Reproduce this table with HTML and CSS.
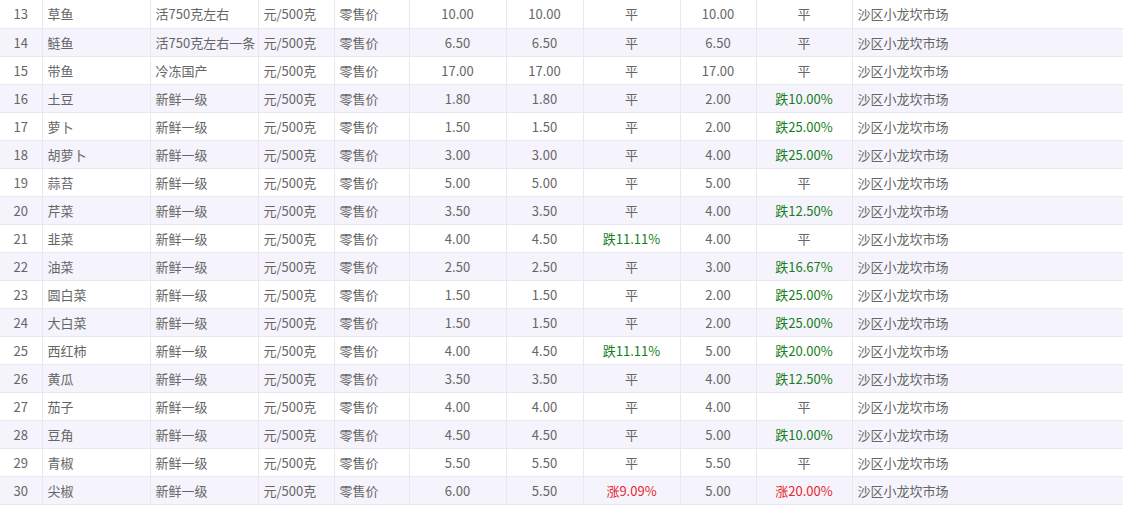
FILE: index.html
```html
<!DOCTYPE html>
<html lang="zh">
<head>
<meta charset="utf-8">
<title>价格表</title>
<link rel="stylesheet" href="styles.css">
</head>
<body>
<table class="price-table">
<colgroup>
<col class="c-no"><col class="c-name"><col class="c-spec"><col class="c-unit"><col class="c-type"><col class="c-p1"><col class="c-p2"><col class="c-ch1"><col class="c-p3"><col class="c-ch2"><col class="c-mkt">
</colgroup>
<tbody>
<tr><td class="ctr">13</td><td>草鱼</td><td>活750克左右</td><td>元/500克</td><td>零售价</td><td class="ctr">10.00</td><td class="ctr">10.00</td><td class="ctr">平</td><td class="ctr">10.00</td><td class="ctr">平</td><td>沙区小龙坎市场</td></tr>
<tr><td class="ctr">14</td><td>鲢鱼</td><td>活750克左右一条</td><td>元/500克</td><td>零售价</td><td class="ctr">6.50</td><td class="ctr">6.50</td><td class="ctr">平</td><td class="ctr">6.50</td><td class="ctr">平</td><td>沙区小龙坎市场</td></tr>
<tr><td class="ctr">15</td><td>带鱼</td><td>冷冻国产</td><td>元/500克</td><td>零售价</td><td class="ctr">17.00</td><td class="ctr">17.00</td><td class="ctr">平</td><td class="ctr">17.00</td><td class="ctr">平</td><td>沙区小龙坎市场</td></tr>
<tr><td class="ctr">16</td><td>土豆</td><td>新鲜一级</td><td>元/500克</td><td>零售价</td><td class="ctr">1.80</td><td class="ctr">1.80</td><td class="ctr">平</td><td class="ctr">2.00</td><td class="ctr down">跌10.00%</td><td>沙区小龙坎市场</td></tr>
<tr><td class="ctr">17</td><td>萝卜</td><td>新鲜一级</td><td>元/500克</td><td>零售价</td><td class="ctr">1.50</td><td class="ctr">1.50</td><td class="ctr">平</td><td class="ctr">2.00</td><td class="ctr down">跌25.00%</td><td>沙区小龙坎市场</td></tr>
<tr><td class="ctr">18</td><td>胡萝卜</td><td>新鲜一级</td><td>元/500克</td><td>零售价</td><td class="ctr">3.00</td><td class="ctr">3.00</td><td class="ctr">平</td><td class="ctr">4.00</td><td class="ctr down">跌25.00%</td><td>沙区小龙坎市场</td></tr>
<tr><td class="ctr">19</td><td>蒜苔</td><td>新鲜一级</td><td>元/500克</td><td>零售价</td><td class="ctr">5.00</td><td class="ctr">5.00</td><td class="ctr">平</td><td class="ctr">5.00</td><td class="ctr">平</td><td>沙区小龙坎市场</td></tr>
<tr><td class="ctr">20</td><td>芹菜</td><td>新鲜一级</td><td>元/500克</td><td>零售价</td><td class="ctr">3.50</td><td class="ctr">3.50</td><td class="ctr">平</td><td class="ctr">4.00</td><td class="ctr down">跌12.50%</td><td>沙区小龙坎市场</td></tr>
<tr><td class="ctr">21</td><td>韭菜</td><td>新鲜一级</td><td>元/500克</td><td>零售价</td><td class="ctr">4.00</td><td class="ctr">4.50</td><td class="ctr down">跌11.11%</td><td class="ctr">4.00</td><td class="ctr">平</td><td>沙区小龙坎市场</td></tr>
<tr><td class="ctr">22</td><td>油菜</td><td>新鲜一级</td><td>元/500克</td><td>零售价</td><td class="ctr">2.50</td><td class="ctr">2.50</td><td class="ctr">平</td><td class="ctr">3.00</td><td class="ctr down">跌16.67%</td><td>沙区小龙坎市场</td></tr>
<tr><td class="ctr">23</td><td>圆白菜</td><td>新鲜一级</td><td>元/500克</td><td>零售价</td><td class="ctr">1.50</td><td class="ctr">1.50</td><td class="ctr">平</td><td class="ctr">2.00</td><td class="ctr down">跌25.00%</td><td>沙区小龙坎市场</td></tr>
<tr><td class="ctr">24</td><td>大白菜</td><td>新鲜一级</td><td>元/500克</td><td>零售价</td><td class="ctr">1.50</td><td class="ctr">1.50</td><td class="ctr">平</td><td class="ctr">2.00</td><td class="ctr down">跌25.00%</td><td>沙区小龙坎市场</td></tr>
<tr><td class="ctr">25</td><td>西红柿</td><td>新鲜一级</td><td>元/500克</td><td>零售价</td><td class="ctr">4.00</td><td class="ctr">4.50</td><td class="ctr down">跌11.11%</td><td class="ctr">5.00</td><td class="ctr down">跌20.00%</td><td>沙区小龙坎市场</td></tr>
<tr><td class="ctr">26</td><td>黄瓜</td><td>新鲜一级</td><td>元/500克</td><td>零售价</td><td class="ctr">3.50</td><td class="ctr">3.50</td><td class="ctr">平</td><td class="ctr">4.00</td><td class="ctr down">跌12.50%</td><td>沙区小龙坎市场</td></tr>
<tr><td class="ctr">27</td><td>茄子</td><td>新鲜一级</td><td>元/500克</td><td>零售价</td><td class="ctr">4.00</td><td class="ctr">4.00</td><td class="ctr">平</td><td class="ctr">4.00</td><td class="ctr">平</td><td>沙区小龙坎市场</td></tr>
<tr><td class="ctr">28</td><td>豆角</td><td>新鲜一级</td><td>元/500克</td><td>零售价</td><td class="ctr">4.50</td><td class="ctr">4.50</td><td class="ctr">平</td><td class="ctr">5.00</td><td class="ctr down">跌10.00%</td><td>沙区小龙坎市场</td></tr>
<tr><td class="ctr">29</td><td>青椒</td><td>新鲜一级</td><td>元/500克</td><td>零售价</td><td class="ctr">5.50</td><td class="ctr">5.50</td><td class="ctr">平</td><td class="ctr">5.50</td><td class="ctr">平</td><td>沙区小龙坎市场</td></tr>
<tr><td class="ctr">30</td><td>尖椒</td><td>新鲜一级</td><td>元/500克</td><td>零售价</td><td class="ctr">6.00</td><td class="ctr">5.50</td><td class="ctr up">涨9.09%</td><td class="ctr">5.00</td><td class="ctr up">涨20.00%</td><td>沙区小龙坎市场</td></tr>
</tbody>
</table>
</body>
</html>
```
FILE: styles.css
```css
html, body {
  margin: 0;
  padding: 0;
  background: #ffffff;
}
.price-table {
  width: 1123px;
  table-layout: fixed;
  border-collapse: collapse;
  font-family: "Noto Sans CJK SC", "Microsoft YaHei", sans-serif;
  font-size: 13px;
  color: #666666;
}
.c-no { width: 42px; }
.c-name { width: 108px; }
.c-spec { width: 108px; }
.c-unit { width: 76px; }
.c-type { width: 75px; }
.c-p1 { width: 97px; }
.c-p2 { width: 77px; }
.c-ch1 { width: 97px; }
.c-p3 { width: 76px; }
.c-ch2 { width: 96px; }
.c-mkt { width: 271px; }
.price-table tr {
  height: 28px;
}
.price-table tr:nth-child(even) {
  background: #f5f3fb;
}
.price-table td {
  height: 26px;
  padding: 1px 0 0 5px;
  border-bottom: 1px solid #e9e8ef;
  border-left: 1px solid #e9e8ef;
  white-space: nowrap;
  overflow: hidden;
  line-height: 26px;
  vertical-align: middle;
}
.price-table td:first-child {
  border-left: none;
}
.price-table td.ctr {
  text-align: center;
  padding: 1px 0 0 0;
}
.down { color: #15801a; }
.up { color: #e8262e; }
```
